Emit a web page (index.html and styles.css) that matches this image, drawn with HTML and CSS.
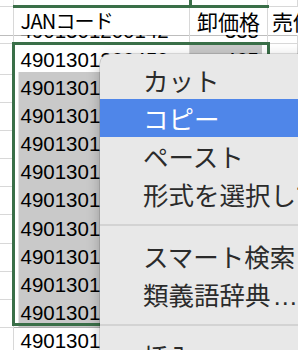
FILE: index.html
```html
<!DOCTYPE html>
<html lang="ja">
<head>
<meta charset="utf-8">
<link rel="stylesheet" href="styles.css">
</head>
<body>
<div class="sheet">
  <div class="row r-top"><div class="c c0"></div><div class="c c1"></div><div class="c c2"></div><div class="c c3"></div></div>
  <div class="row r-head"><div class="c c0"></div><div class="c c1 jan">JANコード</div><div class="c c2">卸価格</div><div class="c c3">売価</div></div>
  <div class="row r-part"><div class="c c0"></div><div class="c c1"><span class="in">4901301200142</span></div><div class="c c2 num"><span class="in">335</span></div><div class="c c3"></div></div>
  <div class="row r-data sel active"><div class="c c0"></div><div class="c c1">4901301200459</div><div class="c c2 num">465</div><div class="c c3"></div></div>
  <div class="row r-data sel"><div class="c c0"></div><div class="c c1">4901301200466</div><div class="c c2 num">465</div><div class="c c3"></div></div>
  <div class="row r-data sel"><div class="c c0"></div><div class="c c1">4901301200473</div><div class="c c2 num">465</div><div class="c c3"></div></div>
  <div class="row r-data sel"><div class="c c0"></div><div class="c c1">4901301200480</div><div class="c c2 num">465</div><div class="c c3"></div></div>
  <div class="row r-data sel"><div class="c c0"></div><div class="c c1">4901301200497</div><div class="c c2 num">465</div><div class="c c3"></div></div>
  <div class="row r-data sel"><div class="c c0"></div><div class="c c1">4901301200503</div><div class="c c2 num">465</div><div class="c c3"></div></div>
  <div class="row r-data sel"><div class="c c0"></div><div class="c c1">4901301200510</div><div class="c c2 num">465</div><div class="c c3"></div></div>
  <div class="row r-data sel"><div class="c c0"></div><div class="c c1">4901301200527</div><div class="c c2 num">465</div><div class="c c3"></div></div>
  <div class="row r-data sel"><div class="c c0"></div><div class="c c1">4901301200534</div><div class="c c2 num">465</div><div class="c c3"></div></div>
  <div class="row r-data sel"><div class="c c0"></div><div class="c c1">4901301200541</div><div class="c c2 num">465</div><div class="c c3"></div></div>
  <div class="row r-data"><div class="c c0"></div><div class="c c1">4901301200558</div><div class="c c2 num">465</div><div class="c c3"></div></div>

  <div class="green-h"></div>
  <div class="green-v"></div>
  <div class="selection"></div>

  <div class="menu">
    <div class="item">カット</div>
    <div class="item hl">コピー</div>
    <div class="item">ペースト</div>
    <div class="item">形式を選択してペースト</div>
    <div class="sep"></div>
    <div class="item">スマート検索</div>
    <div class="item">類義語辞典<span class="ell">…</span></div>
    <div class="sep"></div>
    <div class="item">挿入</div>
  </div>
</div>
</body>
</html>
```

FILE: styles.css
```css
* {
  box-sizing: border-box;
  margin: 0;
  padding: 0;
}

html, body {
  width: 298px;
  height: 350px;
  overflow: hidden;
  background: #fff;
}

body {
  font-family: "Liberation Sans", "Noto Sans CJK JP", sans-serif;
  color: #000;
}

.sheet {
  position: relative;
  width: 298px;
  height: 350px;
  overflow: hidden;
  background: #fff;
}

.row {
  display: grid;
  grid-template-columns: 13.5px 176.5px 78px 1fr;
}

.c {
  border-right: 1px solid #d8d8d8;
  border-bottom: 1px solid #d8d8d8;
  white-space: nowrap;
  font-size: 20.5px;
  line-height: 28px;
  padding-left: 7px;
}

.c0 {
  padding-left: 0;
}

.num {
  text-align: right;
  padding-left: 0;
  padding-right: 8px;
}

.r-top {
  height: 6.5px;
}

.r-head {
  height: 28.5px;
}

.r-head .c {
  border-bottom-color: #bdbdbd;
  font-family: "Noto Sans CJK JP", sans-serif;
  font-size: 21px;
  line-height: 28px;
}

.r-head .jan {
  font-size: 20px;
  letter-spacing: -0.8px;
}

.r-head .c3 {
  padding-left: 4px;
}

.r-part {
  height: 8.5px;
}

.r-part .c {
  overflow: hidden;
}

.r-part .in {
  display: block;
  margin-top: -18.5px;
}

.r-data {
  height: 28.1px;
}

.r-data .c {
  padding-top: 2.5px;
}

.sel .c1,
.sel .c2 {
  background: #c9c9c9;
  border-bottom-color: #afafaf;
}

.sel .c1 {
  box-shadow: inset 4.5px 0 0 #fff;
}

.sel .c2 {
  box-shadow: inset -5px 0 0 #fff;
}

.active .c1 {
  background: #fff;
  border-bottom-color: #b8b8b8;
}

.green-h {
  position: absolute;
  left: 13px;
  top: 5px;
  width: 256px;
  height: 3px;
  background: #3a6f48;
}

.green-v {
  position: absolute;
  left: 189px;
  top: 0;
  width: 3px;
  height: 6px;
  background: #3a6f48;
}

.selection {
  position: absolute;
  left: 12px;
  top: 42px;
  width: 258px;
  height: 284px;
  border: 3px solid #3a6f48;
}

.menu {
  position: absolute;
  left: 100px;
  top: 54px;
  width: 240px;
  height: 330px;
  padding-top: 7px;
  background: #e8e8e8;
  border-radius: 10px 0 0 0;
  box-shadow: 0 0 0 0.5px rgba(0, 0, 0, 0.22), 0 4px 14px rgba(0, 0, 0, 0.25);
  font-family: "Noto Sans CJK JP", sans-serif;
  font-size: 25.5px;
  color: #2b2b2b;
  overflow: hidden;
}

.item {
  height: 38px;
  line-height: 38px;
  padding-left: 43px;
  white-space: nowrap;
}

.item.hl {
  background: #4f86e9;
  color: #fff;
}

.ell {
  font-family: "Liberation Sans", sans-serif;
  padding-left: 2px;
}

.sep {
  height: 24px;
  display: flex;
  align-items: center;
}

.sep::before {
  content: "";
  flex: 1;
  height: 2px;
  background: #d3d3d3;
}
```
